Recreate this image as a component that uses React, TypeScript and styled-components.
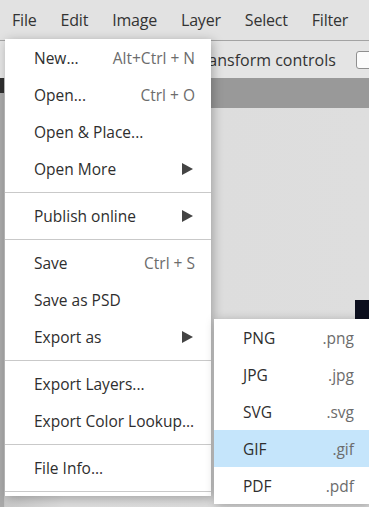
import React from 'react';
import styled, { createGlobalStyle } from 'styled-components';

const GlobalStyle = createGlobalStyle`
    html, body {
        margin: 0;
        padding: 0;
        overflow: hidden;
    }
    body {
        font-family: "Open Sans", "Liberation Sans", sans-serif;
    }
`;

type MenuEntry =
    | { kind: 'item'; label: string; shortcut?: string; submenu?: boolean }
    | { kind: 'sep' };

const fileMenu: MenuEntry[] = [
    { kind: 'item', label: 'New...', shortcut: 'Alt+Ctrl + N' },
    { kind: 'item', label: 'Open...', shortcut: 'Ctrl + O' },
    { kind: 'item', label: 'Open & Place...' },
    { kind: 'item', label: 'Open More', submenu: true },
    { kind: 'sep' },
    { kind: 'item', label: 'Publish online', submenu: true },
    { kind: 'sep' },
    { kind: 'item', label: 'Save', shortcut: 'Ctrl + S' },
    { kind: 'item', label: 'Save as PSD' },
    { kind: 'item', label: 'Export as', submenu: true },
    { kind: 'sep' },
    { kind: 'item', label: 'Export Layers...' },
    { kind: 'item', label: 'Export Color Lookup...' },
    { kind: 'sep' },
    { kind: 'item', label: 'File Info...' },
    { kind: 'sep' },
];

const exportFormats = [
    { name: 'PNG', ext: '.png' },
    { name: 'JPG', ext: '.jpg' },
    { name: 'SVG', ext: '.svg' },
    { name: 'GIF', ext: '.gif', active: true },
    { name: 'PDF', ext: '.pdf' },
];

const topMenus = ['File', 'Edit', 'Image', 'Layer', 'Select', 'Filter'];

const Page = styled.div`
    position: relative;
    width: 369px;
    height: 507px;
    overflow: hidden;
    background: #dddddd;
    display: flex;
    flex-direction: column;
`;

const MenuBar = styled.div`
    height: 40px;
    flex-shrink: 0;
    display: flex;
    align-items: center;
    background: #e2e2e2;
    border-bottom: 1px solid #a3a3a3;
`;

const TopMenu = styled.div`
    padding: 0 12px;
    font-size: 16px;
    letter-spacing: -0.2px;
    color: #333;
    white-space: nowrap;
    line-height: 40px;
`;

const OptionsBar = styled.div`
    height: 37px;
    flex-shrink: 0;
    display: flex;
    align-items: center;
    padding-left: 193px;
    background: #e4e4e4;
    font-size: 16px;
    color: #333;
    white-space: nowrap;
`;

const CheckBox = styled.span`
    margin-left: 20px;
    width: 16px;
    height: 16px;
    flex-shrink: 0;
    border: 1px solid #8f8f8f;
    border-radius: 3px;
    background: #fbfbfb;
`;

const Workspace = styled.div`
    flex: 1;
    display: flex;
`;

const SidePanel = styled.div`
    width: 4px;
    display: flex;
    flex-direction: column;
    background: #a9a9a9;
    border-right: 1px solid #c4c4c4;
`;

const SideDark = styled.div`
    height: 15px;
    background: #2f2f2f;
`;

const MainArea = styled.div`
    flex: 1;
    display: flex;
    flex-direction: column;
`;

const TabBand = styled.div`
    height: 30px;
    background: #999999;
`;

const Canvas = styled.div`
    flex: 1;
    position: relative;
    background: linear-gradient(to right, #c9c9c9 0px, #dcdcdc 60px, #dedede 100%);
`;

const ImageCorner = styled.div`
    position: absolute;
    left: 350px;
    top: 192px;
    width: 30px;
    height: 40px;
    background: #0c0f1e;
`;

const Dropdown = styled.div<{ left: number; top: number; width: number }>`
    position: absolute;
    left: ${p => p.left}px;
    top: ${p => p.top}px;
    width: ${p => p.width}px;
    background: #ffffff;
    box-shadow: 2px 2px 10px rgba(0, 0, 0, 0.28);
    font-size: 15.5px;
    color: #2e2e2e;
`;

const Row = styled.div<{ active?: boolean; padRight: number }>`
    height: 37px;
    display: flex;
    align-items: center;
    padding: 0 ${p => p.padRight}px 0 29px;
    background: ${p => (p.active ? '#c5e5fb' : 'transparent')};
    white-space: nowrap;
`;

const Label = styled.span`
    flex: 1;
`;

const Shortcut = styled.span`
    color: #6c6c6c;
`;

const Separator = styled.div`
    height: 1px;
    margin: 5px 0 4px;
    background: #c9c9c9;
`;

const Arrow = () => (
    <svg width="11" height="12" viewBox="0 0 11 12" style={{ marginRight: 2 }}>
        <polygon points="0,0 11,6 0,12" fill="#444" />
    </svg>
);

export default function App() {
    return (
        <Page>
            <GlobalStyle />
            <MenuBar>
                {topMenus.map(m => (
                    <TopMenu key={m}>{m}</TopMenu>
                ))}
            </MenuBar>
            <OptionsBar>
                Transform controls
                <CheckBox />
            </OptionsBar>
            <Workspace>
                <SidePanel>
                    <SideDark />
                </SidePanel>
                <MainArea>
                    <TabBand />
                    <Canvas>
                        <ImageCorner />
                    </Canvas>
                </MainArea>
            </Workspace>

            <Dropdown left={5} top={39} width={206}>
                {fileMenu.map((e, i) =>
                    e.kind === 'sep' ? (
                        <Separator key={i} />
                    ) : (
                        <Row key={i} padRight={16}>
                            <Label>{e.label}</Label>
                            {e.shortcut && <Shortcut>{e.shortcut}</Shortcut>}
                            {e.submenu && <Arrow />}
                        </Row>
                    )
                )}
            </Dropdown>

            <Dropdown left={214} top={319} width={155}>
                {exportFormats.map(f => (
                    <Row key={f.name} active={f.active} padRight={15}>
                        <Label>{f.name}</Label>
                        <Shortcut>{f.ext}</Shortcut>
                    </Row>
                ))}
            </Dropdown>
        </Page>
    );
}
